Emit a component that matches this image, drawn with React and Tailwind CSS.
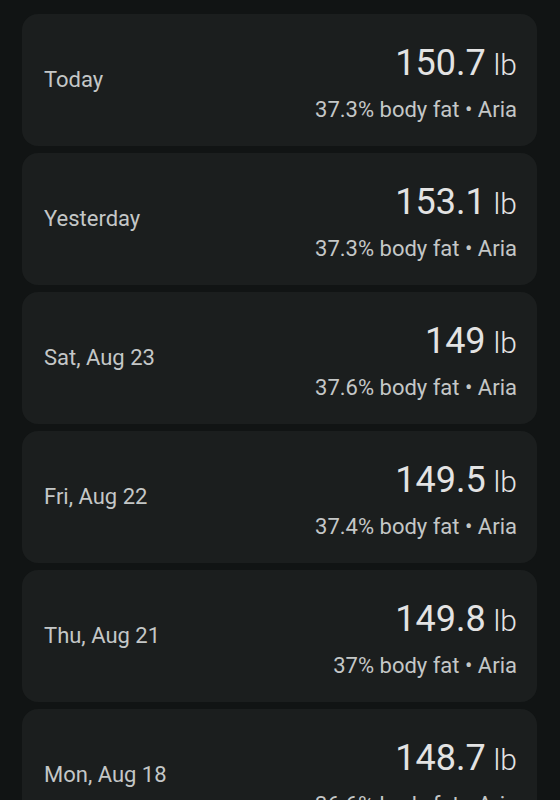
import React from "react";

const rows = [
  { label: "Today", value: "150.7", fat: "37.3%" },
  { label: "Yesterday", value: "153.1", fat: "37.3%" },
  { label: "Sat, Aug 23", value: "149", fat: "37.6%" },
  { label: "Fri, Aug 22", value: "149.5", fat: "37.4%" },
  { label: "Thu, Aug 21", value: "149.8", fat: "37%" },
  { label: "Mon, Aug 18", value: "148.7", fat: "36.6%" },
];

export default function App() {
  return (
    <div
      className="h-[800px] w-[560px] overflow-hidden bg-[#111414]"
      style={{ fontFamily: "Roboto, 'Noto Sans', sans-serif" }}
    >
      <div className="flex flex-col gap-[7px] pt-[14px] pl-[22px] pr-[23px]">
        {rows.map((r) => (
          <div
            key={r.label}
            className="flex h-[132px] shrink-0 items-center justify-between rounded-[16px] bg-[#1b1e1e] pl-[22px] pr-[20px]"
          >
            <div className="text-[22px] leading-[28px] text-[#c4c7c7]">{r.label}</div>
            <div className="flex flex-col items-end pt-[6px]">
              <div className="text-[36px] leading-[40px] text-[#e3e3e3]">
                {r.value}
                <span className="ml-[8px] text-[30px] font-light leading-[28px]">lb</span>
              </div>
              <div className="mt-[13px] text-[22px] leading-[28px] text-[#c4c7c7]">
                {r.fat} body fat • Aria
              </div>
            </div>
          </div>
        ))}
      </div>
    </div>
  );
}
